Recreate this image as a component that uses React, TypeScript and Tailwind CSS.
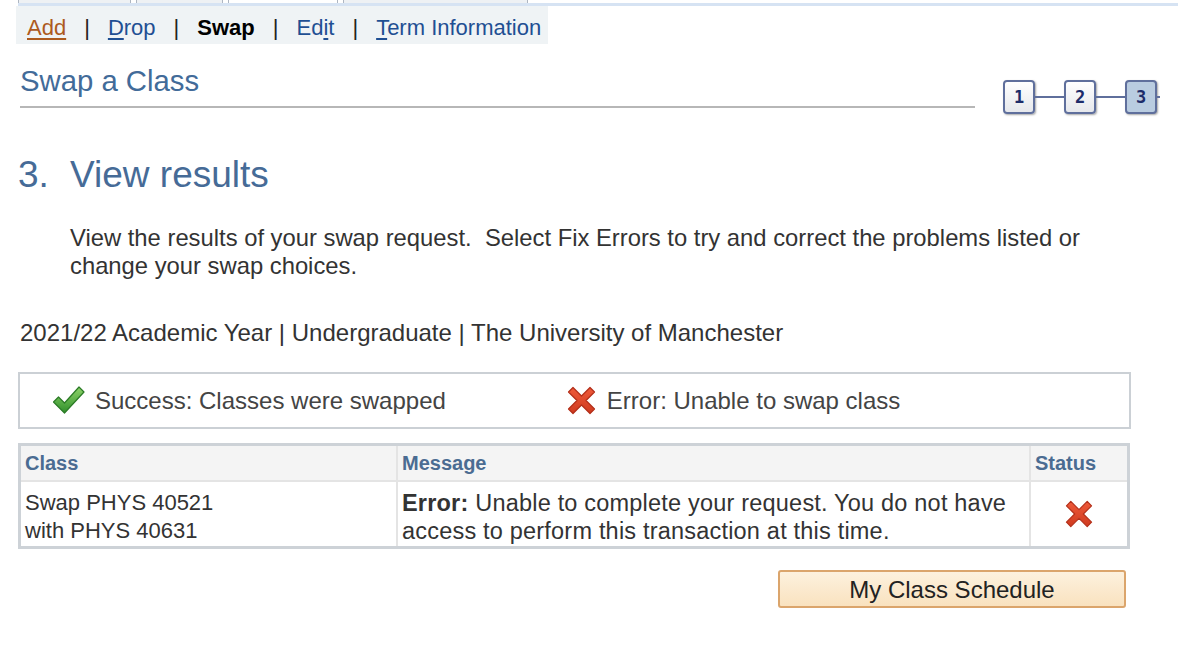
import React from 'react'

const font = { fontFamily: '"Liberation Sans", Arial, Helvetica, sans-serif' }

function CheckIcon() {
  return (
    <svg width="33" height="31" viewBox="0 0 33 31" className="shrink-0">
      <defs>
        <linearGradient id="chk" x1="0" y1="0" x2="0" y2="1">
          <stop offset="0" stopColor="#8fd36a" />
          <stop offset="1" stopColor="#2f8f2a" />
        </linearGradient>
      </defs>
      <polygon
        points="1.5,17 6.5,12 12.5,18 27,2 32,7 12.5,28"
        fill="url(#chk)"
        stroke="#2a7a25"
        strokeWidth="1.2"
        strokeLinejoin="round"
      />
    </svg>
  )
}

function CrossIcon({ size = 29 }: { size?: number }) {
  return (
    <svg width={size} height={size} viewBox="0 0 29 29" className="shrink-0">
      <defs>
        <linearGradient id="crs" x1="0" y1="0" x2="0" y2="1">
          <stop offset="0" stopColor="#ee5a3a" />
          <stop offset="1" stopColor="#cf3a1f" />
        </linearGradient>
      </defs>
      <polygon
        points="1.5,6 6,1.5 14.5,10 23,1.5 27.5,6 19,14.5 27.5,23 23,27.5 14.5,19 6,27.5 1.5,23 10,14.5"
        fill="url(#crs)"
        stroke="#b32e18"
        strokeWidth="1.2"
        strokeLinejoin="round"
      />
    </svg>
  )
}

function StepBox({ n, active }: { n: string; active?: boolean }) {
  return (
    <div
      className={
        'w-[32px] h-[34px] rounded-[4px] border-2 border-[#5f6f9c] flex items-center justify-center shadow-[1px_1px_2px_rgba(0,0,0,0.35)] ' +
        (active ? 'bg-[#b9cce0]' : 'bg-gradient-to-b from-white to-[#e6e8ec]')
      }
    >
      <span
        className="text-[17px] font-bold text-[#1d2c6a] leading-none"
        style={{ fontFamily: '"DejaVu Sans Mono", monospace' }}
      >
        {n}
      </span>
    </div>
  )
}

export default function App() {
  return (
    <div className="w-[1178px] h-[666px] bg-white overflow-hidden text-[#333]" style={font}>
      {/* tab stubs */}
      <div className="flex h-[3px] pl-[18px] gap-[5px]">
        <div className="w-[113px] bg-[#eef1f4] border-x border-[#aeb6c2]" />
        <div className="w-[87px] bg-[#eef1f4] border-x border-[#aeb6c2]" />
        <div className="w-[110px] bg-white border-x border-[#aeb6c2]" />
        <div className="w-[185px] bg-[#eef1f4] border-x border-[#aeb6c2]" />
      </div>
      <div className="h-[3px] ml-[18px] bg-[#d6e3f3]" />

      {/* sub nav */}
      <div className="ml-[16px] w-[532px] h-[38px] bg-[#eff3f5] pt-[9px] pl-[11px] flex gap-[18px] text-[22px] leading-[26px]">
        <span className="text-[#ad5a1e] underline underline-offset-[3px]">Add</span>
        <span className="text-[#222]">|</span>
        <span className="text-[#1f4f93]"><u className="underline-offset-[3px]">D</u>rop</span>
        <span className="text-[#222]">|</span>
        <span className="font-bold text-black">Swap</span>
        <span className="text-[#222]">|</span>
        <span className="text-[#1f4f93]">Ed<u className="underline-offset-[3px]">i</u>t</span>
        <span className="text-[#222]">|</span>
        <span className="text-[#1f4f93]"><u className="underline-offset-[3px]">T</u>erm Information</span>
      </div>

      {/* page title + steps */}
      <div className="flex items-start pt-[21px]">
        <div className="ml-[20px] w-[955px] border-b-2 border-[#b7b7b7] pb-[9px]">
          <h1 className="text-[29.3px] leading-[32px] text-[#426b99]">Swap a Class</h1>
        </div>
        <div className="ml-[28px] mt-[15px] flex items-center">
          <StepBox n="1" />
          <div className="w-[29px] h-[2px] bg-[#5f6f9c]" />
          <StepBox n="2" />
          <div className="w-[29px] h-[2px] bg-[#5f6f9c]" />
          <StepBox n="3" active />
          <div className="w-[3px] h-[2px] bg-[#5f6f9c]" />
        </div>
      </div>

      {/* step heading */}
      <h2 className="mt-[41px] ml-[18px] flex text-[37px] leading-[40px] text-[#466b97]">
        <span className="w-[52px]">3.</span>
        <span>View results</span>
      </h2>

      <p className="mt-[29px] ml-[70px] w-[1040px] text-[23.8px] leading-[28px] text-[#333]">
        View the results of your swap request.&nbsp; Select Fix Errors to try and correct the problems listed or change your swap choices.
      </p>

      <div className="mt-[39px] ml-[20px] text-[24px] leading-[28px] text-[#333]">
        2021/22 Academic Year | Undergraduate | The University of Manchester
      </div>

      {/* legend */}
      <div className="mt-[25px] ml-[18px] w-[1113px] h-[57px] border-2 border-[#cbd0d5] flex items-center text-[24px] text-[#444]">
        <div className="ml-[32px] flex items-center gap-[10px]">
          <CheckIcon />
          <span>Success: Classes were swapped</span>
        </div>
        <div className="ml-[121px] flex items-center gap-[11px]">
          <CrossIcon />
          <span>Error: Unable to swap class</span>
        </div>
      </div>

      {/* results table */}
      <div className="mt-[14px] ml-[18px] w-[1112px] border-[3px] border-[#cdd2d7] bg-[#e4e4e4]">
        <div className="grid grid-cols-[375px_631px_1fr] gap-[2px] bg-[#e4e4e4]">
          <div className="bg-[#f4f4f4] h-[34px] px-[4px] flex items-center text-[20px] font-bold text-[#4b6c92]">Class</div>
          <div className="bg-[#f4f4f4] h-[34px] px-[4px] flex items-center text-[20px] font-bold text-[#4b6c92]">Message</div>
          <div className="bg-[#f4f4f4] h-[34px] px-[4px] flex items-center text-[20px] font-bold text-[#4b6c92]">Status</div>
          <div className="bg-white h-[64px] px-[4px] pt-[7px] text-[22px] leading-[28px] text-[#333]">
            Swap PHYS 40521
            <br />
            with PHYS 40631
          </div>
          <div className="bg-white h-[64px] px-[4px] pt-[7px] text-[23.5px] tracking-[0.2px] leading-[28px] text-[#333]">
            <b className="text-[#333]">Error:</b> Unable to complete your request. You do not have access to perform this transaction at this time.
          </div>
          <div className="bg-white h-[64px] flex items-center justify-center">
            <CrossIcon size={28} />
          </div>
        </div>
      </div>

      {/* action */}
      <div className="mt-[21px] ml-[18px] w-[1108px] flex justify-end">
        <button className="w-[348px] h-[38px] rounded-[3px] border-2 border-[#dba56c] bg-gradient-to-b from-[#fdf1de] to-[#f9e2bf] text-[24px] text-[#222]">
          My Class Schedule
        </button>
      </div>
    </div>
  )
}
